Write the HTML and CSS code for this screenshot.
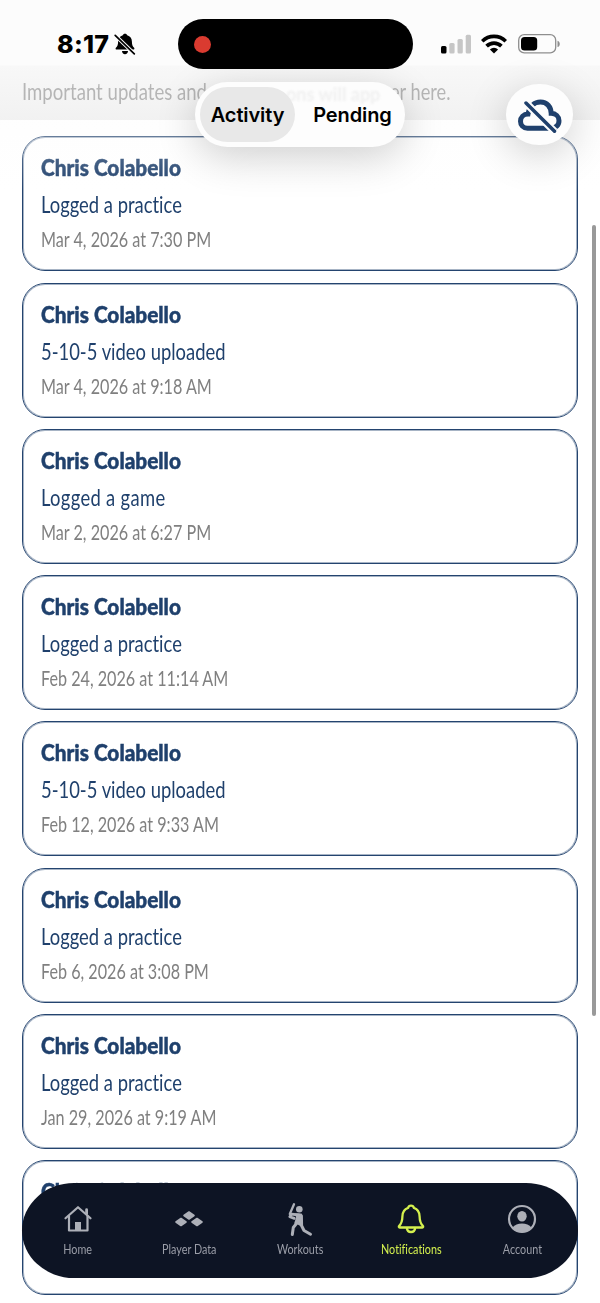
FILE: index.html
```html
<!DOCTYPE html>
<html lang="en">
<head>
<meta charset="utf-8">
<title>Notifications</title>
<link rel="stylesheet" href="styles.css">
</head>
<body>
<div class="screen">
  <main class="feed">
    <p class="intro"><span class="narrow">Important updates and</span><span class="narrow tail">er here.</span></p>
    <article class="card"><h2 class="narrow">Chris Colabello</h2><p class="event narrow">Logged a practice</p><time class="narrow">Mar 4, 2026 at 7:30 PM</time></article>
    <article class="card"><h2 class="narrow">Chris Colabello</h2><p class="event narrow">5-10-5 video uploaded</p><time class="narrow">Mar 4, 2026 at 9:18 AM</time></article>
    <article class="card"><h2 class="narrow">Chris Colabello</h2><p class="event game narrow">Logged a game</p><time class="narrow">Mar 2, 2026 at 6:27 PM</time></article>
    <article class="card"><h2 class="narrow">Chris Colabello</h2><p class="event narrow">Logged a practice</p><time class="narrow">Feb 24, 2026 at 11:14 AM</time></article>
    <article class="card"><h2 class="narrow">Chris Colabello</h2><p class="event narrow">5-10-5 video uploaded</p><time class="narrow">Feb 12, 2026 at 9:33 AM</time></article>
    <article class="card"><h2 class="narrow">Chris Colabello</h2><p class="event narrow">Logged a practice</p><time class="narrow">Feb 6, 2026 at 3:08 PM</time></article>
    <article class="card"><h2 class="narrow">Chris Colabello</h2><p class="event narrow">Logged a practice</p><time class="narrow">Jan 29, 2026 at 9:19 AM</time></article>
    <article class="card"><h2 class="narrow">Chris Colabello</h2></article>
  </main>
  <div class="scrollbar"></div>

  <div class="veil"></div>
  <header class="status">
    <div class="clock">8:17
      <svg class="muted" viewBox="0 0 22 22"><path d="M11 .8c1.200 0 2 .7 2.200 1.500 3 .8 4.700 3.200 4.700 6.200 0 3.600.8 4.800 2.200 6.200.6.700.3 1.900-.7 1.900H2.600c-1 0-1.300-1.200-.7-1.900 1.400-1.400 2.200-2.600 2.200-6.200 0-3 1.700-5.400 4.700-6.200C9 1.500 9.800.8 11 .8zM8 18h6c0 1.800-1.300 3.200-3 3.200s-3-1.400-3-3.200z"/><path d="M1.200 2.300 20.300 20.800" stroke="#fcfcfc" stroke-width="3.600"/><path d="M1.200 2.300 20.300 20.800" stroke="#000" stroke-width="1.700" stroke-linecap="round"/></svg>
    </div>
    <div class="island"><i class="rec"></i></div>
    <div class="signals">
      <svg class="bars" viewBox="0 0 30 20"><rect x="0" y="12" width="5.500" height="7.500" rx="1.500"/><g fill="#c6c6c6"><rect x="8.300" y="9" width="5.300" height="10.500" rx="1.500"/><rect x="16.500" y="5" width="5.300" height="14.500" rx="1.500"/><rect x="24.700" y=".7" width="5.300" height="18.800" rx="1.500"/></g></svg>
      <svg class="wifi" viewBox="0 0 26 20"><g fill="none" stroke="#000" stroke-width="3.700"><path d="M1.200 7.300a16.700 16.700 0 0 1 23.600 0"/><path d="M5.600 12.100a10.500 10.500 0 0 1 14.800 0"/></g><path d="M13 19.500 8.900 15.400a5.900 5.900 0 0 1 8.200 0z"/></svg>
      <svg class="battery" viewBox="0 0 42 20"><rect x=".7" y=".7" width="37" height="18.200" rx="5.500" fill="none" stroke="#8e8e8e" stroke-width="1.300"/><rect x="3" y="3" width="16.200" height="13.600" rx="3.600"/><path d="M39.500 6.700c3 1 3 5.400 0 6.400z" fill="#8e8e8e"/></svg>
    </div>
  </header>
  <nav class="segments">
    <span class="ghost" aria-hidden="true">ons will app</span>
    <button class="segment selected">Activity</button>
    <button class="segment">Pending</button>
  </nav>
  <button class="offline" aria-label="Offline">
    <svg viewBox="0 0 46 36"><path d="M14 31.200H10.500C6 31.200 3.500 28 3.500 24.300c0-4 3-7.200 7.500-7.300C12.500 9 17.500 5 23.500 5c6.500 0 10.500 5 10.700 11.300 4.500.2 7.800 3.200 7.800 7.400 0 4.500-3.500 7.500-7.500 7.500z" fill="none" stroke="#1f406c" stroke-width="5"/><path d="M8 5 37.500 34.500" stroke="#fdfdfd" stroke-width="7.500"/><path d="M9 6 37.500 34.300" stroke="#1f406c" stroke-width="3.500" stroke-linecap="round"/></svg>
  </button>

  <nav class="tabbar">
    <a class="tab"><svg viewBox="0 0 30 30"><g fill="none" stroke="#adb0b8" stroke-width="2.200" stroke-linecap="round" stroke-linejoin="round"><path d="M2.500 14.300 15 3.200 27.500 14.300"/><path d="M6 12v14.500h18.500V12"/><path d="M23.600 9.800V5.700" stroke-width="2.800"/></g><path d="M12 18h6v8h-6z"/></svg><span class="narrow">Home</span></a>
    <a class="tab"><svg viewBox="0 0 30 30"><g stroke="#adb0b8" stroke-width="1.600" stroke-linejoin="round"><path d="M15 8 20 11.500l-5 3.500L10 11.500zM7 14.500l5 3.500L7 21.500l-5-3.500zM23 14.500l5 3.500-5 3.500-5-3.500z"/></g></svg><span class="narrow">Player Data</span></a>
    <a class="tab"><svg class="batter" viewBox="0 0 30 36"><circle cx="14.300" cy="8.300" r="3.300"/><g fill="none" stroke="#adb0b8" stroke-linecap="round" stroke-linejoin="round"><path d="M9 3.300 4.800 13" stroke-width="2.300"/><path d="M14 14 6.500 13.200 4.800 15.700l4.500 1.700" stroke-width="2.800"/><path d="M11.500 22.500 8.300 26.500 7.300 33.500M15.500 22.500 19 29.500l6.500 3.700" stroke-width="3"/></g><path d="M10 12.600h6.500l1.400 1.800.2 9.800-3 .6-3-1.600-3-.8 2-6z"/></svg><span class="narrow">Workouts</span></a>
    <a class="tab active"><svg viewBox="0 0 30 30"><g fill="none" stroke="#d4f04e" stroke-width="2.300" stroke-linejoin="round"><path d="M15 1.700c-1.500 0-2.600 1-2.900 2.200C8.200 5.200 6.500 8.500 6.400 12.500c-.1 4.500-.8 7-3.200 9.300-.7.700-.4 1.700.5 1.700h22.600c.9 0 1.200-1 .5-1.700-2.400-2.300-3.100-4.800-3.200-9.300-.1-4-1.800-7.300-5.700-8.600C17.600 2.700 16.500 1.700 15 1.700z"/><path d="M10.800 24c.3 2.700 2 4 4.200 4s3.900-1.300 4.200-4"/></g></svg><span class="narrow">Notifications</span></a>
    <a class="tab"><svg viewBox="0 0 30 30"><circle cx="15" cy="15" r="13" fill="none" stroke="#adb0b8" stroke-width="2.200"/><ellipse cx="15" cy="12.300" rx="4.700" ry="5.300"/><path d="M5.500 23.500c2.200-2.500 5.500-4 9.500-4s7.300 1.500 9.500 4C22 27 18.700 28.300 15 28.300S8 27 5.500 23.500z"/></svg><span class="narrow">Account</span></a>
  </nav>
</div>
</body>
</html>
```
FILE: styles.css
```css
* { box-sizing: border-box; }
body, p, h2 { margin: 0; }
button { border: 0; background: none; padding: 0; font: inherit; color: inherit; }
body { background: #fff; font-family: Lato, sans-serif; font-variant-ligatures: none; }

.screen { position: relative; width: 600px; height: 1303px; overflow: hidden; background: #fff; }

.narrow { display: block; width: max-content; transform: scaleX(.8); transform-origin: 0 50%; white-space: nowrap; }

.feed { display: flex; flex-direction: column; gap: 11.300px; padding: 77px 22px 0; }
.intro { display: grid; grid-template-columns: 368px 1fr; height: 48px; font-size: 22.500px; line-height: 30px; color: #808080; }
.intro .narrow { transform: scaleX(.825); }
.intro .tail { transform: scaleX(.81); }
.card { flex: none; height: 135px; padding: 14px 18px; border: 1px solid #24446f; border-radius: 23px; box-shadow: inset 0 0 0 1px rgba(36,68,111,.4); background: #fff; color: #1f406c; }
.card h2 { font-size: 23.500px; font-weight: 900; line-height: 32px; transform: scaleX(.885); -webkit-text-stroke: .5px #1f406c; }
.event { margin-top: 6px; font-size: 23px; line-height: 31px; }
.event.game { letter-spacing: .400px; }
.card time { margin-top: 5px; font-size: 20.300px; line-height: 28px; color: #808080; transform: scaleX(.797); }

.scrollbar { position: absolute; right: 4px; top: 225px; width: 4px; height: 791px; border-radius: 2px; background: #999; }

.veil { position: absolute; inset: 0 0 auto; height: 190px; background: linear-gradient(rgba(252,252,252,1) 0 65px, rgba(241,241,241,.5) 66px, rgba(228,228,228,.5) 119.500px, rgba(252,252,252,.4) 120px, rgba(255,255,255,0) 190px); }
.status { position: absolute; inset: 19px 0 auto; display: grid; grid-template-columns: 178px 235px 1fr; height: 50px; align-items: center; }
.clock { display: flex; align-items: center; gap: 5px; padding-left: 57px; font: 800 25px Inter, sans-serif; letter-spacing: .3px; }
.muted { width: 22px; height: 22px; }
.island { display: flex; align-items: center; height: 50px; padding-left: 16px; border-radius: 25px; background: #000; }
.rec { width: 17px; height: 17px; border-radius: 50%; background: #da3b30; }
.signals { display: flex; align-items: center; gap: 10px; padding-left: 28px; }
.bars { width: 30px; height: 20px; }
.wifi { width: 26px; height: 20px; }
.battery { width: 42px; height: 20px; margin-left: 1px; }

.segments { position: absolute; left: 195px; top: 82px; display: flex; width: 210px; height: 65px; padding: 5px; border-radius: 33px; background: #fdfdfd; box-shadow: 0 10px 42px rgba(0,0,0,.19); font: 600 20px Inter, sans-serif; color: #000; }
.segment { position: relative; flex: 1; padding-left: 10px; letter-spacing: -.1px; line-height: 22px; }
.segment.selected { flex: none; width: 95px; padding: 0; border-radius: 28px; background: #e8e8e8; }
.ghost { position: absolute; left: 91px; top: 3px; font: 700 18px/18px Lato, sans-serif; color: #f0f0f0; filter: blur(1px); white-space: nowrap; }
.offline { position: absolute; left: 506px; top: 84px; display: grid; place-items: center; width: 67px; height: 61px; border-radius: 33px / 30px; background: #fdfdfd; box-shadow: 0 10px 42px rgba(0,0,0,.19); }
.offline svg { width: 46px; height: 36px; }

.tabbar { position: absolute; left: 22px; top: 1183px; display: grid; grid-template-columns: repeat(5, 1fr); width: 556px; height: 95px; padding-top: 21px; border-radius: 52px / 47.500px; background: #0d1424; color: #9b9ea8; }
.tab { display: flex; flex-direction: column; align-items: center; }
.tab svg { width: 30px; height: 30px; fill: #adb0b8; }
.tab .batter { height: 36px; margin: -3px 0; }
.tab .narrow { margin-top: 6px; font-size: 14px; line-height: 18px; transform: scaleX(.77); transform-origin: 50% 50%; }
.tab.active { color: #d4f04e; }
```
